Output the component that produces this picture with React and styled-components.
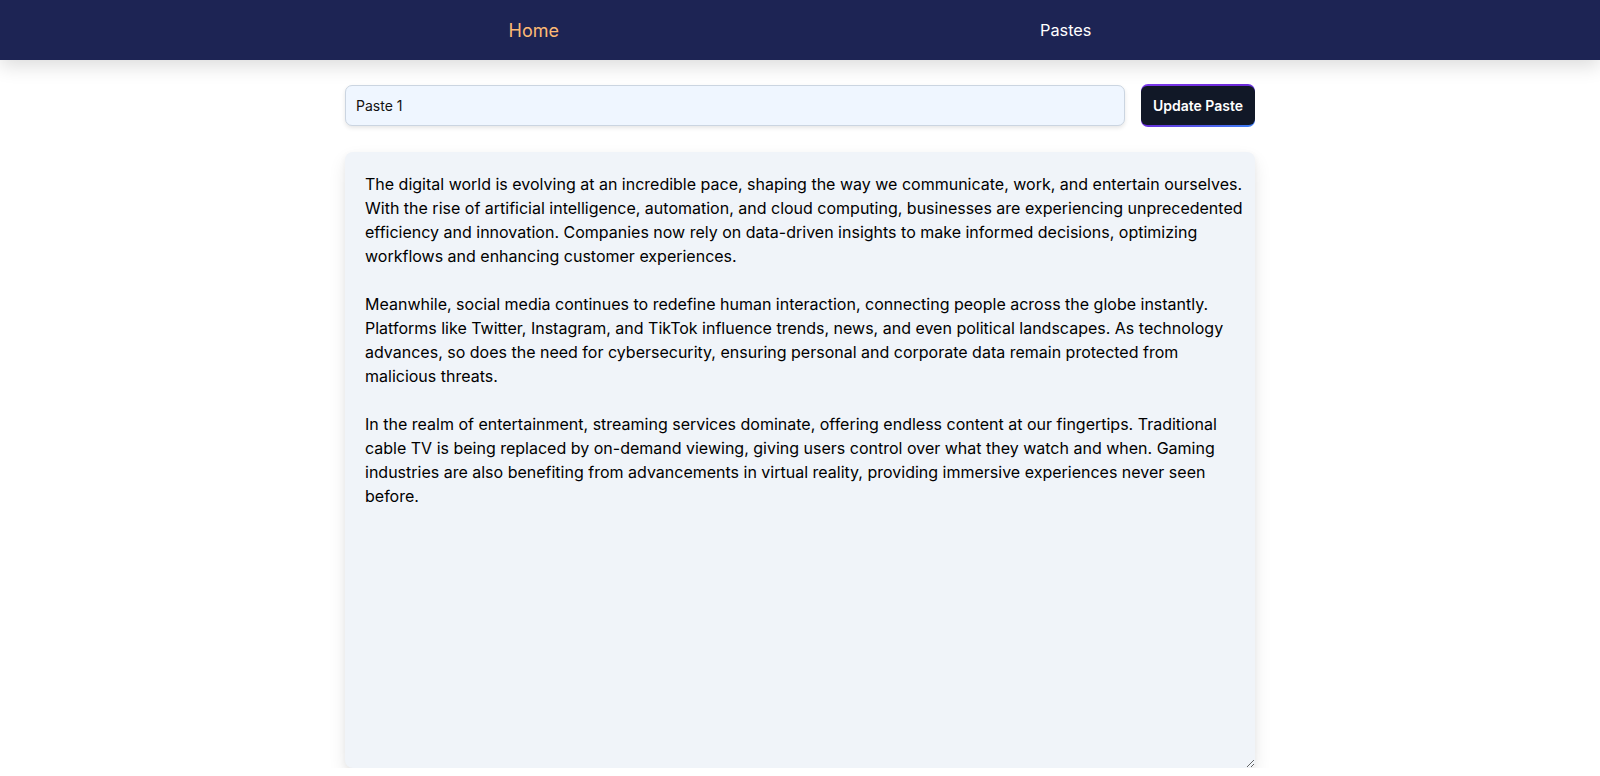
import React from "react";
import styled, { createGlobalStyle } from "styled-components";

const Global = createGlobalStyle`
  html, body { margin: 0; padding: 0; background: #ffffff; }
  body { font-family: Inter, "Noto Sans", sans-serif; overflow: hidden; }
  * { box-sizing: border-box; }
`;

const Nav = styled.nav`
  height: 60px;
  background: #1d2454;
  display: flex;
  align-items: center;
  justify-content: center;
  gap: 481px;
  box-shadow: 0 6px 18px rgba(0, 0, 0, 0.14);
  position: relative;
  z-index: 1;
`;

const NavLink = styled.a`
  font-family: Inter, sans-serif;
  font-size: ${(p) => (p.$active ? "18px" : "16.3px")};
  color: ${(p) => (p.$active ? "#fdba74" : "#ffffff")};
  text-decoration: none;
  cursor: pointer;
`;

const Main = styled.main`
  width: 910px;
  margin: 0 auto;
  padding-top: 24px;
  display: flex;
  flex-direction: column;
  gap: 25px;
`;

const Row = styled.div`
  display: flex;
  align-items: center;
  gap: 16px;
`;

const TitleInput = styled.input`
  flex: 1;
  height: 41px;
  background: #eff6ff;
  border: 1px solid #cbd5e1;
  border-radius: 7px;
  padding: 0 10px;
  font-family: Inter, sans-serif;
  font-size: 14px;
  color: #111111;
  box-shadow: 0 2px 4px rgba(0, 0, 0, 0.1);
  outline: none;
`;

const Button = styled.button`
  border: none;
  padding: 2px 0;
  border-radius: 7px;
  background: linear-gradient(to bottom right, #7c3aed, #6d28d9 45%, #3b82f6);
  cursor: pointer;
  width: 114px;
`;

const ButtonInner = styled.span`
  display: block;
  background: #111827;
  border-radius: 6px;
  height: 39px;
  line-height: 39px;
  color: #ffffff;
  font-family: Inter, sans-serif;
  font-size: 14px;
  font-weight: 600;
  text-align: center;
`;

const Editor = styled.textarea`
  width: 910px;
  height: 616px;
  background: #f0f4f9;
  border: none;
  border-radius: 8px;
  padding: 20px 12px 20px 20px;
  font-family: Inter, sans-serif;
  font-size: 16px;
  line-height: 24px;
  color: #000000;
  box-shadow: 0 8px 18px rgba(0, 0, 0, 0.09), 0 2px 6px rgba(0, 0, 0, 0.05);
  outline: none;
  display: block;
`;

const text = `The digital world is evolving at an incredible pace, shaping the way we communicate, work, and entertain ourselves. With the rise of artificial intelligence, automation, and cloud computing, businesses are experiencing unprecedented efficiency and innovation. Companies now rely on data-driven insights to make informed decisions, optimizing workflows and enhancing customer experiences.

Meanwhile, social media continues to redefine human interaction, connecting people across the globe instantly. Platforms like Twitter, Instagram, and TikTok influence trends, news, and even political landscapes. As technology advances, so does the need for cybersecurity, ensuring personal and corporate data remain protected from malicious threats.

In the realm of entertainment, streaming services dominate, offering endless content at our fingertips. Traditional cable TV is being replaced by on-demand viewing, giving users control over what they watch and when. Gaming industries are also benefiting from advancements in virtual reality, providing immersive experiences never seen before.`;

export default function App() {
  return (
    <>
      <Global />
      <Nav>
        <NavLink $active>Home</NavLink>
        <NavLink>Pastes</NavLink>
      </Nav>
      <Main>
        <Row>
          <TitleInput defaultValue="Paste 1" />
          <Button>
            <ButtonInner>Update Paste</ButtonInner>
          </Button>
        </Row>
        <Editor defaultValue={text} />
      </Main>
    </>
  );
}
